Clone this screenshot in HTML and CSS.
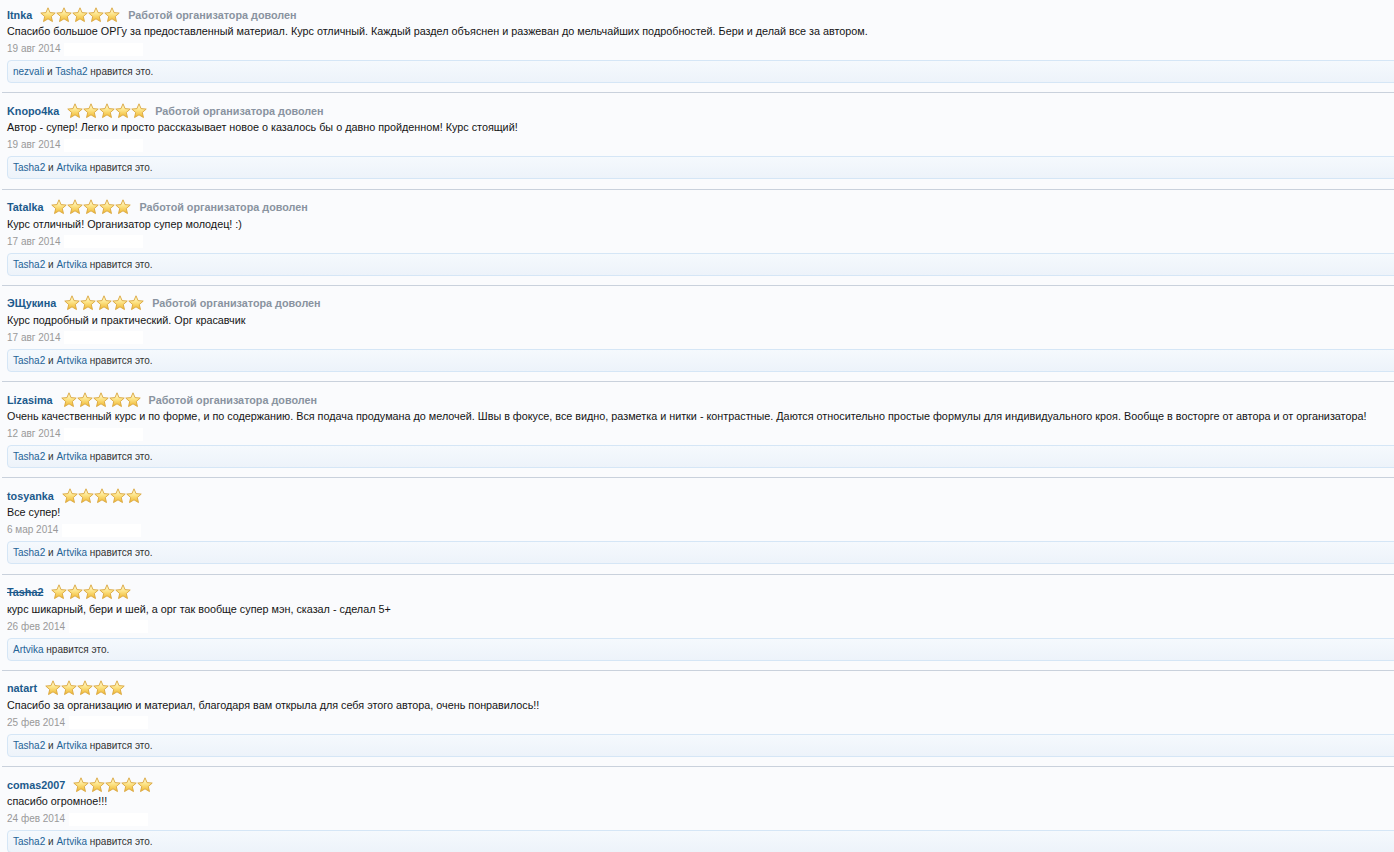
FILE: index.html
```html
<!DOCTYPE html>
<html lang="ru">
<head>
    <meta charset="UTF-8">
    <title>Отзывы</title>
    <link rel="stylesheet" href="styles.css">
</head>
<body>

<svg class="defs" width="0" height="0">
    <defs>
        <linearGradient id="starFill" x1="0" y1="0" x2="0" y2="1">
            <stop offset="0" stop-color="#fffbe0"/>
            <stop offset="0.45" stop-color="#fde58a"/>
            <stop offset="1" stop-color="#efb52c"/>
        </linearGradient>
        <symbol id="star" viewBox="0 0 16 16">
            <path d="M8 0.8 L10.05 5.6 L15.23 6.05 L11.3 9.5 L12.47 14.55 L8 11.85 L3.53 14.55 L4.7 9.5 L0.77 6.05 L5.95 5.6 Z" fill="url(#starFill)" stroke="#d9a53c" stroke-width="0.9" stroke-linejoin="round"/>
        </symbol>
    </defs>
</svg>

<div class="reviews">

    <div class="review">
        <div class="review-head">
            <a class="user">Itnka</a>
            <span class="stars"><svg viewBox="0 0 80 16"><use href="#star" x="0" width="16" height="16"/><use href="#star" x="16" width="16" height="16"/><use href="#star" x="32" width="16" height="16"/><use href="#star" x="48" width="16" height="16"/><use href="#star" x="64" width="16" height="16"/></svg></span>
            <span class="status">Работой организатора доволен</span>
        </div>
        <div class="review-text">Спасибо большое ОРГу за предоставленный материал. Курс отличный. Каждый раздел объяснен и разжеван до мельчайших подробностей. Бери и делай все за автором.</div>
        <div class="review-date">19 авг 2014<span class="blank"></span></div>
        <div class="likes"><a>nezvali</a> и <a>Tasha2</a> нравится это.</div>
    </div>

    <div class="review">
        <div class="review-head">
            <a class="user">Knopo4ka</a>
            <span class="stars"><svg viewBox="0 0 80 16"><use href="#star" x="0" width="16" height="16"/><use href="#star" x="16" width="16" height="16"/><use href="#star" x="32" width="16" height="16"/><use href="#star" x="48" width="16" height="16"/><use href="#star" x="64" width="16" height="16"/></svg></span>
            <span class="status">Работой организатора доволен</span>
        </div>
        <div class="review-text">Автор - супер! Легко и просто рассказывает новое о казалось бы о давно пройденном! Курс стоящий!</div>
        <div class="review-date">19 авг 2014<span class="blank"></span></div>
        <div class="likes"><a>Tasha2</a> и <a>Artvika</a> нравится это.</div>
    </div>

    <div class="review">
        <div class="review-head">
            <a class="user">Tatalka</a>
            <span class="stars"><svg viewBox="0 0 80 16"><use href="#star" x="0" width="16" height="16"/><use href="#star" x="16" width="16" height="16"/><use href="#star" x="32" width="16" height="16"/><use href="#star" x="48" width="16" height="16"/><use href="#star" x="64" width="16" height="16"/></svg></span>
            <span class="status">Работой организатора доволен</span>
        </div>
        <div class="review-text">Курс отличный! Организатор супер молодец! :)</div>
        <div class="review-date">17 авг 2014<span class="blank"></span></div>
        <div class="likes"><a>Tasha2</a> и <a>Artvika</a> нравится это.</div>
    </div>

    <div class="review">
        <div class="review-head">
            <a class="user">ЭЩукина</a>
            <span class="stars"><svg viewBox="0 0 80 16"><use href="#star" x="0" width="16" height="16"/><use href="#star" x="16" width="16" height="16"/><use href="#star" x="32" width="16" height="16"/><use href="#star" x="48" width="16" height="16"/><use href="#star" x="64" width="16" height="16"/></svg></span>
            <span class="status">Работой организатора доволен</span>
        </div>
        <div class="review-text">Курс подробный и практический. Орг красавчик</div>
        <div class="review-date">17 авг 2014<span class="blank"></span></div>
        <div class="likes"><a>Tasha2</a> и <a>Artvika</a> нравится это.</div>
    </div>

    <div class="review">
        <div class="review-head">
            <a class="user">Lizasima</a>
            <span class="stars"><svg viewBox="0 0 80 16"><use href="#star" x="0" width="16" height="16"/><use href="#star" x="16" width="16" height="16"/><use href="#star" x="32" width="16" height="16"/><use href="#star" x="48" width="16" height="16"/><use href="#star" x="64" width="16" height="16"/></svg></span>
            <span class="status">Работой организатора доволен</span>
        </div>
        <div class="review-text">Очень качественный курс и по форме, и по содержанию. Вся подача продумана до мелочей. Швы в фокусе, все видно, разметка и нитки - контрастные. Даются относительно простые формулы для индивидуального кроя. Вообще в восторге от автора и от организатора!</div>
        <div class="review-date">12 авг 2014<span class="blank"></span></div>
        <div class="likes"><a>Tasha2</a> и <a>Artvika</a> нравится это.</div>
    </div>

    <div class="review">
        <div class="review-head">
            <a class="user">tosyanka</a>
            <span class="stars"><svg viewBox="0 0 80 16"><use href="#star" x="0" width="16" height="16"/><use href="#star" x="16" width="16" height="16"/><use href="#star" x="32" width="16" height="16"/><use href="#star" x="48" width="16" height="16"/><use href="#star" x="64" width="16" height="16"/></svg></span>
        </div>
        <div class="review-text">Все супер!</div>
        <div class="review-date">6 мар 2014<span class="blank"></span></div>
        <div class="likes"><a>Tasha2</a> и <a>Artvika</a> нравится это.</div>
    </div>

    <div class="review">
        <div class="review-head">
            <a class="user banned">Tasha2</a>
            <span class="stars"><svg viewBox="0 0 80 16"><use href="#star" x="0" width="16" height="16"/><use href="#star" x="16" width="16" height="16"/><use href="#star" x="32" width="16" height="16"/><use href="#star" x="48" width="16" height="16"/><use href="#star" x="64" width="16" height="16"/></svg></span>
        </div>
        <div class="review-text">курс шикарный, бери и шей, а орг так вообще супер мэн, сказал - сделал 5+</div>
        <div class="review-date">26 фев 2014<span class="blank"></span></div>
        <div class="likes"><a>Artvika</a> нравится это.</div>
    </div>

    <div class="review">
        <div class="review-head">
            <a class="user">natart</a>
            <span class="stars"><svg viewBox="0 0 80 16"><use href="#star" x="0" width="16" height="16"/><use href="#star" x="16" width="16" height="16"/><use href="#star" x="32" width="16" height="16"/><use href="#star" x="48" width="16" height="16"/><use href="#star" x="64" width="16" height="16"/></svg></span>
        </div>
        <div class="review-text">Спасибо за организацию и материал, благодаря вам открыла для себя этого автора, очень понравилось!!</div>
        <div class="review-date">25 фев 2014<span class="blank"></span></div>
        <div class="likes"><a>Tasha2</a> и <a>Artvika</a> нравится это.</div>
    </div>

    <div class="review">
        <div class="review-head">
            <a class="user">comas2007</a>
            <span class="stars"><svg viewBox="0 0 80 16"><use href="#star" x="0" width="16" height="16"/><use href="#star" x="16" width="16" height="16"/><use href="#star" x="32" width="16" height="16"/><use href="#star" x="48" width="16" height="16"/><use href="#star" x="64" width="16" height="16"/></svg></span>
        </div>
        <div class="review-text">спасибо огромное!!!</div>
        <div class="review-date">24 фев 2014<span class="blank"></span></div>
        <div class="likes"><a>Tasha2</a> и <a>Artvika</a> нравится это.</div>
    </div>

</div>

</body>
</html>
```

FILE: styles.css
```css
body {
    margin: 0;
    background-color: #fafbfd;
    font-family: "Liberation Sans", Arial, sans-serif;
    font-size: 10.8px;
    color: #141414;
    overflow: hidden;
}

.defs {
    position: absolute;
    width: 0;
    height: 0;
}

.reviews {
    margin-top: -3px;
    margin-left: 2px;
}

.review {
    padding: 9px 0 9.25px 5px;
    border-bottom: 1px solid #c9d1dc;
}

.review-head {
    display: flex;
    align-items: center;
    height: 17px;
}

.user {
    font-weight: bold;
    color: #1c5a8c;
}

.user.banned {
    text-decoration: line-through;
}

.stars {
    display: flex;
    margin-left: 8px;
}

.stars svg {
    width: 80px;
    height: 16px;
    display: block;
}

.status {
    margin-left: 8px;
    font-weight: bold;
    color: #8993a0;
}

.review-text {
    margin-top: 1px;
    line-height: 14px;
}

.review-date {
    margin-top: 4px;
    line-height: 14px;
    font-size: 10px;
    color: #999;
    display: flex;
    align-items: center;
}

.blank {
    display: inline-block;
    width: 79px;
    height: 13px;
    margin-left: 4px;
    background-color: #fff;
}

.likes {
    margin-top: 4px;
    margin-right: -20px;
    height: 21px;
    line-height: 21px;
    padding-left: 5px;
    font-size: 10px;
    color: #333;
    border: 1px solid #d5e6f6;
    border-radius: 4px;
    background: linear-gradient(#f5f9fd, #edf3fa);
}

.likes a {
    color: #246396;
}
```
